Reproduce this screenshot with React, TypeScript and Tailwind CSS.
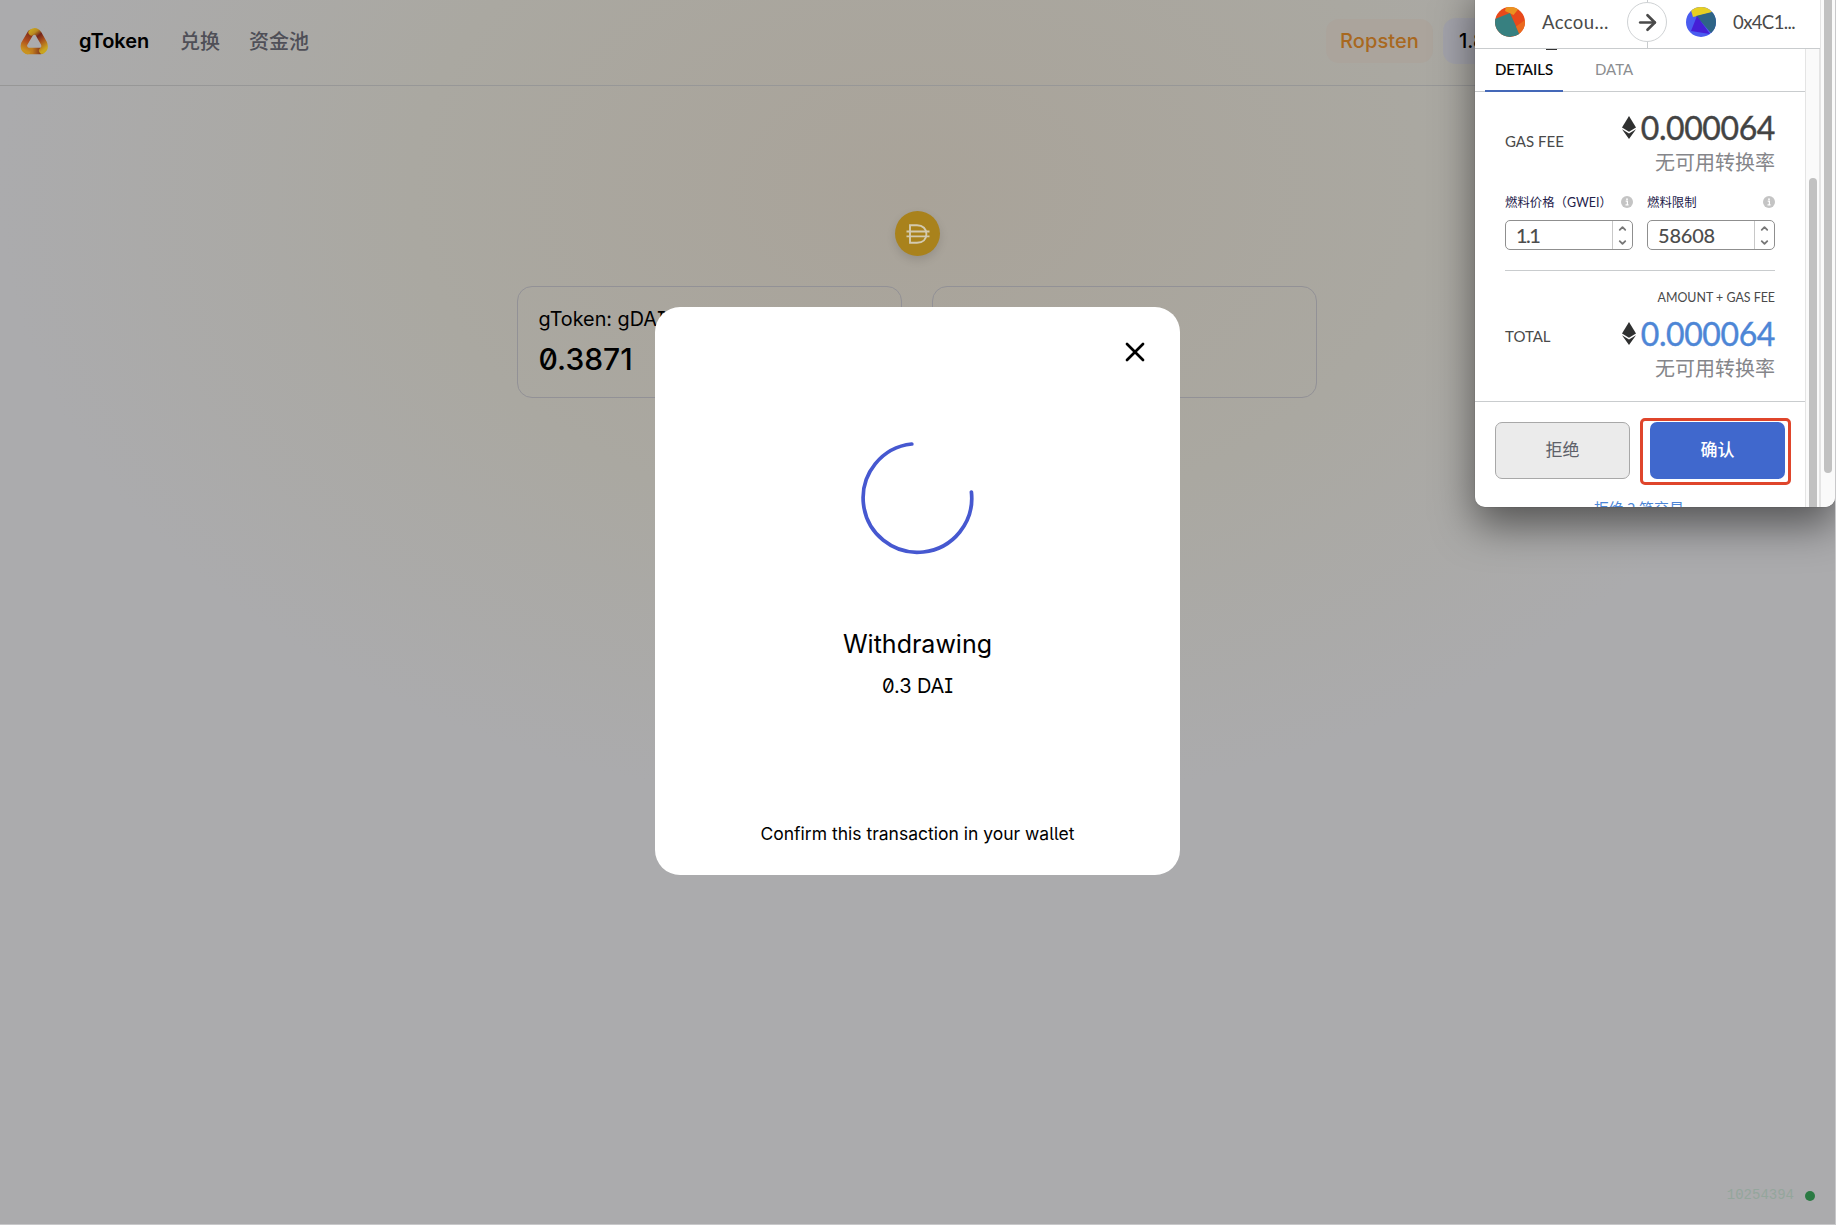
import React from "react";
import { X, ArrowRight, ChevronUp, ChevronDown } from "lucide-react";

const LATO = "font-['Lato','Noto_Sans_CJK_SC',sans-serif]";
const CJK = "font-['Noto_Sans_CJK_SC',sans-serif]";

function Logo() {
  return (
    <svg viewBox="0 0 28 27" className="h-[27px] w-[28px]">
      <defs>
        <linearGradient id="la" x1="4" y1="22" x2="13" y2="4" gradientUnits="userSpaceOnUse">
          <stop offset="0" stopColor="#c9921f" />
          <stop offset="0.45" stopColor="#b04e1c" />
          <stop offset="1" stopColor="#74241a" />
        </linearGradient>
        <linearGradient id="lb" x1="10" y1="2" x2="25" y2="21" gradientUnits="userSpaceOnUse">
          <stop offset="0" stopColor="#c9a51f" />
          <stop offset="0.2" stopColor="#b98a20" />
          <stop offset="0.4" stopColor="#74241a" />
          <stop offset="0.65" stopColor="#a8501c" />
          <stop offset="1" stopColor="#c9a51f" />
        </linearGradient>
        <linearGradient id="lc" x1="2" y1="0" x2="23" y2="0" gradientUnits="userSpaceOnUse">
          <stop offset="0" stopColor="#c9a51f" />
          <stop offset="0.5" stopColor="#bd7a1e" />
          <stop offset="1" stopColor="#74241a" />
        </linearGradient>
      </defs>
      <g fill="none" strokeWidth="6.4" strokeLinecap="round">
        <path d="M7.5 23 L20.5 23.01" stroke="url(#lc)" />
        <path d="M10.6 5 L4.2 16 Q2.8 21 7.5 23" stroke="url(#la)" />
        <path d="M11.6 4.4 Q15.6 2 18.4 5.6 L24 15.5 Q25.8 20 22.2 22.6" stroke="url(#lb)" />
      </g>
    </svg>
  );
}

function DaiIcon() {
  return (
    <div className="flex h-[45px] w-[45px] items-center justify-center rounded-full bg-[#a9821c] shadow-[0_4px_10px_rgba(0,0,0,0.12)]">
      <svg viewBox="0 0 24 20" className="h-5 w-6" fill="none" stroke="#d3cab0" strokeWidth="1.9">
        <path d="M4 1.3 H11 C17 1.3 20.4 5 20.4 10 C20.4 15 17 18.7 11 18.7 H4 Z" />
        <path d="M0.5 7.5 H23.5 M0.5 12.4 H23.5" />
      </svg>
    </div>
  );
}

function Eth() {
  return (
    <svg viewBox="0 0 14 23" className="h-[23px] w-[14px]">
      <path d="M7 0 L14 11.6 L7 15.8 L0 11.6 Z" fill="#2f3030" />
      <path d="M0 13.2 L7 17.4 L14 13.2 L7 23 Z" fill="#2f3030" />
    </svg>
  );
}

function Info() {
  return (
    <svg viewBox="0 0 12 12" className="h-3 w-3">
      <circle cx="6" cy="6" r="6" fill="#c4c4c4" />
      <path d="M4.7 5.2 H6.4 V8.8 M4.5 8.9 H7.6" stroke="#fff" strokeWidth="1.2" fill="none" />
      <circle cx="6" cy="3.2" r="0.9" fill="#fff" />
    </svg>
  );
}

function NumberField({ label, value, spacing }: { label: string; value: string; spacing: string }) {
  return (
    <div className="w-32">
      <div className="flex h-5 items-center justify-between">
        <span className="whitespace-nowrap pt-[2px] text-[12.4px] leading-5 text-[#23214a]">{label}</span>
        <Info />
      </div>
      <div className="mt-[8px] flex h-[30px] overflow-hidden rounded-[5px] border border-[#8f8f8f]">
        <span className={`flex-1 pl-[10px] text-[20px] font-medium leading-[28px] text-[#4d4d4d] ${spacing}`}>{value}</span>
        <span className="flex w-5 flex-col items-center justify-center gap-[3px] border-l border-[#c8c8c8] text-[#777]">
          <ChevronUp size={11} strokeWidth={4} />
          <ChevronDown size={11} strokeWidth={4} />
        </span>
      </div>
    </div>
  );
}

function Amount({ color }: { color: string }) {
  return (
    <div className="flex flex-col items-end">
      <div className="flex h-[35px] items-center gap-1">
        <Eth />
        <span className={`w-[135px] text-right font-['Lato'] text-[32px] leading-[35px] tracking-[-0.4px] [-webkit-text-stroke:0.4px_currentColor] ${color}`}>0.000064</span>
      </div>
      <div className={`${CJK} h-8 text-[20px] leading-[34px] text-[#85868a]`}>无可用转换率</div>
    </div>
  );
}

function Wallet() {
  return (
    <div className={`${LATO} absolute left-[1475px] top-0 flex h-[507px] w-[360px] overflow-hidden rounded-b-[10px] bg-white`}>
      <div className="flex w-[345px] shrink-0 flex-col">
        <div className="flex h-[49px] shrink-0 items-start border-b border-[#c9ccce] text-[18.5px] text-[#4a4a4a]">
          <svg viewBox="0 0 30 30" className="ml-5 mt-[7px] h-[30px] w-[30px] shrink-0">
            <clipPath id="c1"><circle cx="15" cy="15" r="15" /></clipPath>
            <g clipPath="url(#c1)">
              <rect width="30" height="30" fill="#e8491b" />
              <path d="M11 0 H25 L18.5 8 L10 4 Z" fill="#ea9220" />
              <path d="M0 12 L15 6 L25 28 L15 30 H0 Z" fill="#378080" />
              <path d="M21 19.5 L30 13 V30 H25.5 Z" fill="#ea6a1e" />
            </g>
          </svg>
          <span className="ml-[17px] mt-[7px] w-[67px] shrink-0 whitespace-nowrap leading-[30px] tracking-[0.4px]">Accou...</span>
          <div className="ml-[17px] flex h-[48px] w-[42px] shrink-0 flex-col items-center">
            <div className="h-[2px] w-px shrink-0 bg-[#c9ccce]" />
            <div className="flex h-10 w-10 shrink-0 items-center justify-center rounded-full border border-[#cfd2d4]">
              <ArrowRight size={25} strokeWidth={2.6} className="text-[#4a4a4a]" />
            </div>
            <div className="w-px flex-1 bg-[#c9ccce]" />
          </div>
          <svg viewBox="0 0 30 30" className="ml-[18px] mt-[7px] h-[30px] w-[30px] shrink-0">
            <clipPath id="c2"><circle cx="15" cy="15" r="15" /></clipPath>
            <g clipPath="url(#c2)">
              <rect width="30" height="30" fill="#4a5cf0" />
              <path d="M4 0 H25 L26 5.5 L7 10 Z" fill="#e6cf22" />
              <path d="M10 9 L30 4 V26 L25 26 Z" fill="#2e6486" />
              <path d="M11 9 L24 27 L5 24 Z" fill="#451fd6" />
            </g>
          </svg>
          <span className="ml-[17px] mt-[7px] whitespace-nowrap leading-[30px] tracking-[-0.6px]">0x4C1...</span>
        </div>
        <div className="flex min-h-0 flex-1">
          <div className="flex w-[330px] shrink-0 flex-col overflow-hidden">
            <div className="relative flex h-[43px] shrink-0 border-b border-[#c9ccce] text-[15px] leading-[40px]">
              <span className="absolute left-[71px] top-0 h-px w-[11px] bg-[#333]" />
              <span className="ml-[10px] h-[43px] w-[78px] border-b-2 border-[#4468b8] text-center text-black [-webkit-text-stroke:0.2px_currentColor]">DETAILS</span>
              <span className="ml-8 text-[#8b8d90]">DATA</span>
            </div>
            <div className="flex h-[86px] shrink-0 items-center justify-between px-[30px] pt-[16px]">
              <span className="-mt-1 text-[15px] text-[#4a4a4a]">GAS FEE</span>
              <Amount color="text-[#434343]" />
            </div>
            <div className="mx-[30px] mt-[14px] flex h-[79px] shrink-0 justify-between border-b border-[#c9ccce]">
              <NumberField label="燃料价格（GWEI）" value="1.1" spacing="tracking-[-1.5px]" />
              <NumberField label="燃料限制" value="58608" spacing="tracking-[-0.2px]" />
            </div>
            <div className="h-[45px] shrink-0 px-[30px] pt-[17px] text-right text-[12.4px] leading-5 text-[#4a4a4a]">AMOUNT + GAS FEE</div>
            <div className="flex h-[86px] shrink-0 items-start justify-between border-b border-[#c9ccce] px-[30px]">
              <span className="mt-[8px] text-[15px] leading-6 text-[#4a4a4a]">TOTAL</span>
              <Amount color="text-[#4d86d6]" />
            </div>
            <div className={`${CJK} flex h-[96px] shrink-0 gap-5 px-5 pt-5 text-[17px]`}>
              <button className="h-[57px] w-[135px] rounded-[7px] border border-[#a8a8a8] bg-[#ebebeb] pb-[3px] text-[#5d6068]">拒绝</button>
              <button className="h-[57px] w-[135px] rounded-[7px] bg-[#4068cd] pb-[3px] font-medium text-white">确认</button>
            </div>
            <div className={`${CJK} pl-[119px] text-[15px] leading-5 text-[#4d86d6]`}>拒绝 2 笔交易</div>
          </div>
          <div className="w-[15px] border-l border-r border-[#e4e4e4] bg-[#fafafa] pl-[3px] pt-[129px]">
            <div className="h-[340px] w-2 rounded-full bg-[#c1c1c1]" />
          </div>
        </div>
      </div>
      <div className="w-[15px] border-l border-[#e4e4e4] bg-[#fafafa] pl-[3px]">
        <div className="h-[473px] w-2 rounded-b-full bg-[#c1c1c1]" />
      </div>
      <div className="absolute left-[165px] top-[418px] h-[67px] w-[151px] rounded-[5px] border-[3px] border-[#df452b]" />
    </div>
  );
}

export default function App() {
  return (
    <div className="relative h-[1225px] w-[1836px] overflow-hidden border-b border-r border-[#c8c8ca] bg-[#ababad] bg-[radial-gradient(ellipse_920px_620px_at_918px_190px,#a9a399_0%,#aaa8a1_55%,#ababad_100%)] font-['Inter','Noto_Sans_CJK_SC',sans-serif] text-black">
      <header className="flex h-[86px] items-center border-b border-[#979797] pb-[3px] pl-5">
        <Logo />
        <nav className="ml-[31px] flex items-center text-[20px]">
          <span className="w-[101px] font-semibold">gToken</span>
          <span className="w-[69px] pt-px font-medium text-[#4f4f57]">兑换</span>
          <span className="pt-px font-medium text-[#4f4f57]">资金池</span>
        </nav>
        <div className="ml-auto flex w-[509px] items-center gap-[10px]">
          <span className="flex h-11 w-[107px] items-center justify-center rounded-[13px] bg-[#aba49c] text-[20px] font-medium tracking-[0.1px] text-[#a8681f]">Ropsten</span>
          <span className="flex h-[46px] w-[180px] items-center rounded-[13px] bg-[#a3a3ab] pl-[16px] text-[20px] font-medium">1.82 ETH</span>
        </div>
      </header>

      <main className="flex flex-col items-center pt-[125px]">
        <DaiIcon />
        <div className="mr-[2px] mt-[30px] flex gap-[30px] [font-feature-settings:'ss02','zero']">
          <section className="h-28 w-[385px] rounded-[15px] border border-[#929196] px-[21px] pt-5">
            <div className="text-[19.8px] leading-6">gToken: gDAI</div>
            <div className="mt-[11px] text-[30px] font-medium leading-[34px]">0.3871</div>
          </section>
          <section className="h-28 w-[385px] rounded-[15px] border border-[#929196]" />
        </div>
      </main>

      <div role="dialog" className="absolute left-[655px] top-[307px] flex h-[568px] w-[525px] flex-col items-center rounded-[25px] bg-white [font-feature-settings:'ss02','zero']">
        <X size={32} strokeWidth={2} className="mr-[29px] mt-[29px] shrink-0 self-end" />
        <svg viewBox="0 0 116 116" className="mt-[72px] h-[116px] w-[116px] shrink-0" fill="none">
          <path d="M51.8 4 A54.3 54.3 0 1 0 111.4 52" stroke="#4658d0" strokeWidth="3.7" strokeLinecap="round" />
        </svg>
        <div className="mt-[72px] text-[25px] leading-8">Withdrawing</div>
        <div className="mt-[14px] text-[20px] leading-6 tracking-[-0.1px]">0.3 DAI</div>
        <div className="mt-auto pb-[29px] text-[17.5px] leading-6">Confirm this transaction in your wallet</div>
      </div>

      <footer className="absolute bottom-[18px] right-5 flex items-center gap-[11px] font-['Liberation_Mono',monospace] text-[14px] text-[#94a69c]">
        <span>10254394</span>
        <span className="h-[10px] w-[10px] rounded-full bg-[#2b7a43]" />
      </footer>

      <div className="absolute left-[1475px] top-[-20px] h-[527px] w-[360px] rounded-[10px] shadow-[0_18px_40px_rgba(0,0,0,0.5),0_0_1px_rgba(0,0,0,0.5)]" />
      <Wallet />
    </div>
  );
}
